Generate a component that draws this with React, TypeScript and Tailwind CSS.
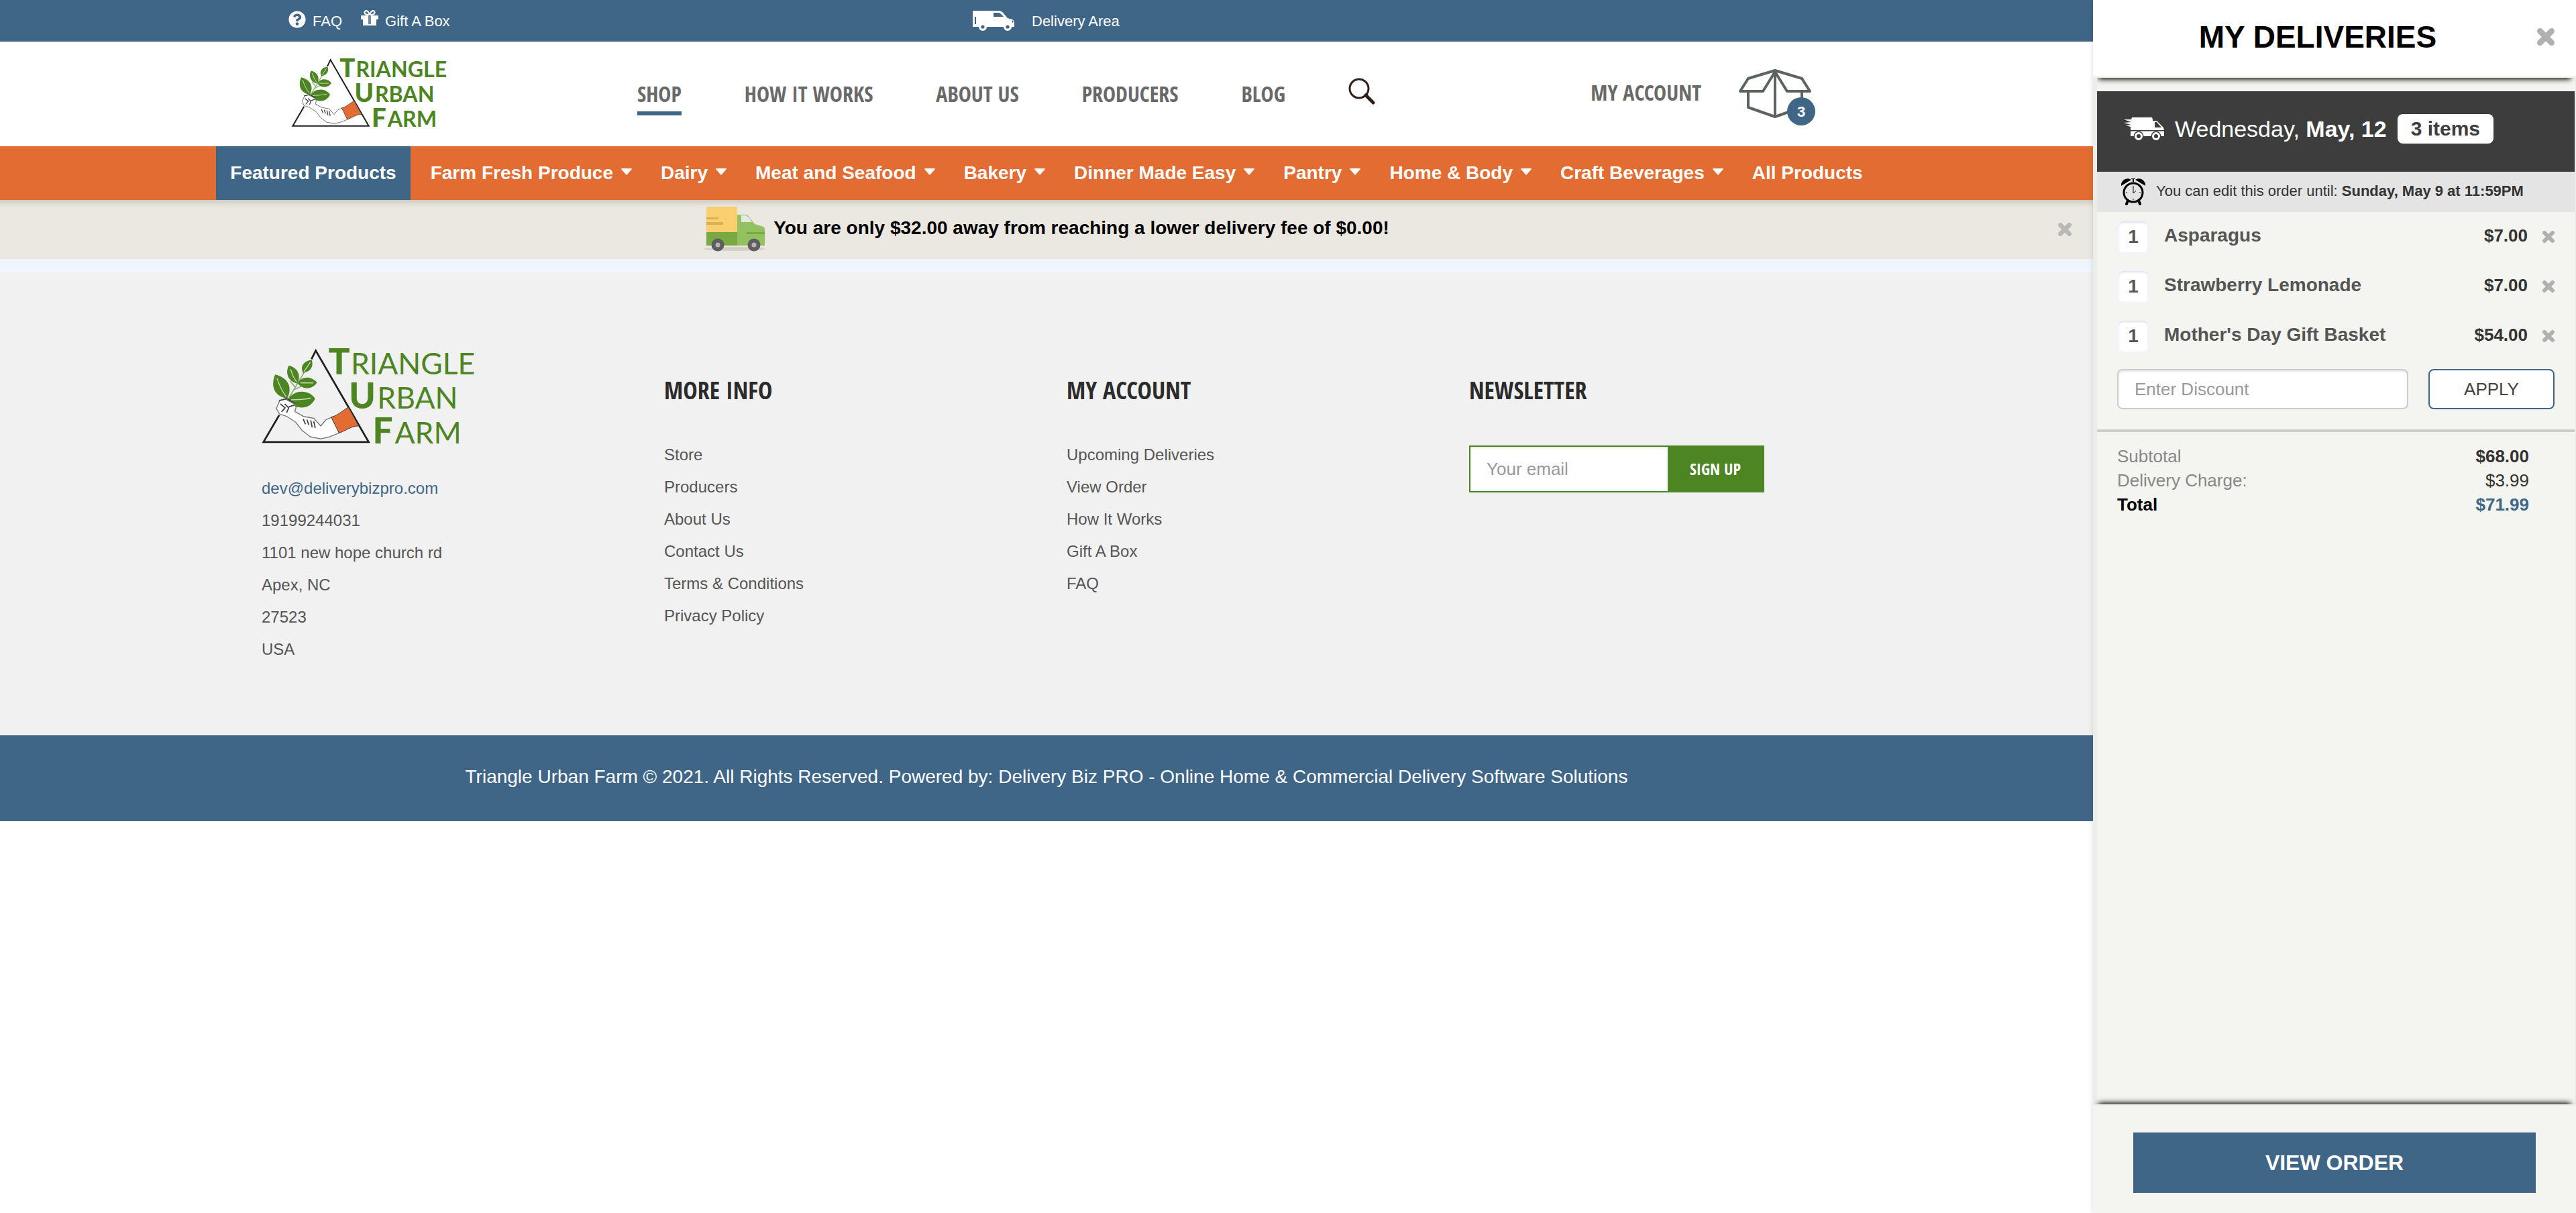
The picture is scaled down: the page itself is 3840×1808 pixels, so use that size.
import React from "react";
import { FaQuestionCircle } from "react-icons/fa";

const navItems = ["HOW IT WORKS", "ABOUT US", "PRODUCERS", "BLOG"];

const categories = [
  "Farm Fresh Produce",
  "Dairy",
  "Meat and Seafood",
  "Bakery",
  "Dinner Made Easy",
  "Pantry",
  "Home & Body",
  "Craft Beverages",
];

const address = ["19199244031", "1101 new hope church rd", "Apex, NC", "27523", "USA"];

const moreInfo = ["Store", "Producers", "About Us", "Contact Us", "Terms & Conditions", "Privacy Policy"];

const account = ["Upcoming Deliveries", "View Order", "How It Works", "Gift A Box", "FAQ"];

const cartItems = [
  { name: "Asparagus", quantity: 1, price: "$7.00" },
  { name: "Strawberry Lemonade", quantity: 1, price: "$7.00" },
  { name: "Mother's Day Gift Basket", quantity: 1, price: "$54.00" },
];

function Logo({ className }: { className: string }) {
  return (
    <svg viewBox="46 42 698 314" className={`overflow-visible ${className}`} role="img" aria-label="Triangle Urban Farm">
      <g fill="none" stroke="#1f1f1f" strokeWidth="6">
        <path d="M208 80 222 52 394 349H52L103 262" />
      </g>
      <path d="M132 210 198 100M150 180 196 157M132 210 108 165M138 150 156 172" fill="none" stroke="#8fb377" strokeWidth="4" />
      <g fill="#4c8522">
        <path d="M90 130C77 160 80 198 128 208 148 176 134 140 90 130Z" />
        <path d="M134 101C122 126 132 152 162 159 176 132 162 106 134 101Z" />
        <path d="M209 82C182 86 170 104 181 125 206 120 216 104 209 82Z" />
        <path d="M163 158C176 134 208 134 226 156 210 180 180 180 163 158Z" />
        <path d="M132 212C146 180 198 174 220 208 204 244 156 248 132 212Z" />
      </g>
      <g fill="none" stroke="#c6dcb6" strokeWidth="3">
        <path d="M96 142Q108 178 126 202M140 112Q148 138 160 154M204 90 184 120M172 157H214M142 212Q180 212 206 206" />
      </g>
      <path
        d="M94 240 105 214 124 210 150 224 158 236 154 250 182 266 216 272 238 297 256 276 276 268 298 320 268 332 238 339 204 332 178 312 156 284 128 266 104 258Z"
        fill="#fff"
        stroke="#777"
        strokeWidth="3"
        strokeLinejoin="round"
      />
      <path d="M104 214 128 208 152 222M108 226 122 238 112 250M122 226 134 238 128 252M136 234 150 230M182 276 188 290M194 278 199 292M206 280 210 300M216 284 220 302" fill="none" stroke="#444" strokeWidth="4" strokeLinecap="round" />
      <path d="M272 268C292 264 308 248 328 236L362 297C340 296 320 312 298 320Z" fill="#e36c33" stroke="#333" strokeWidth="2" />
      <g fill="#4c8522" fontFamily="Lato, sans-serif">
        <text x="263" y="130" fontSize="116" fontWeight="900">T</text>
        <text x="336" y="130" fontSize="97">RIANGLE</text>
        <text x="330" y="241" fontSize="116" fontWeight="900">U</text>
        <text x="422" y="241" fontSize="97">RBAN</text>
        <text x="407" y="353" fontSize="116" fontWeight="900">F</text>
        <text x="479" y="353" fontSize="97">ARM</text>
      </g>
    </svg>
  );
}

function GiftIcon() {
  return (
    <svg viewBox="0 0 26 24" className="h-6 w-6.5" aria-hidden="true">
      <path d="M0 8h11v15H3v-9H0zM15 8h11v6h-3v9h-8z" fill="#fff" />
      <path d="M11 8h4v15h-4z" fill="#fff" opacity=".25" />
      <path d="M12 7C7 7 4 5 6 2s6 1 7 5c1-4 5-8 7-5s-1 5-6 5" fill="none" stroke="#fff" strokeWidth="2" />
      <path d="M10 21h6v2h-6z" fill="#fff" />
    </svg>
  );
}

function VanIcon() {
  return (
    <svg viewBox="0 0 62 30" className="h-7.5 w-15.5" aria-hidden="true">
      <path d="M0 0H39Q43 0 46 4L52 11 59 13Q62 14 62 19V24H0Z" fill="#fff" />
      <path d="M31 3H39Q42 4 46 9H31ZM3 9h2v11H3zM59 14l2 3-2 1z" fill="#406687" />
      <circle cx="15" cy="24" r="6" fill="#fff" />
      <circle cx="52" cy="24" r="6" fill="#fff" />
      <circle cx="15" cy="24" r="2.6" fill="#406687" />
      <circle cx="52" cy="24" r="2.6" fill="#406687" />
    </svg>
  );
}

function FastVanIcon() {
  return (
    <svg viewBox="0 0 60 34" className="h-8.5 w-15" aria-hidden="true">
      <path d="M12 0H41Q43 0 43 5H49L58 14Q60 16 60 19H10V14L3 12 11 11 0 8 11 7 0 3 11 3Z" fill="#fff" />
      <path d="M46 7H49L56 15H46Z" fill="#3d3d3d" />
      <path d="M10 20.500H60V28H10Z" fill="#fff" />
      <circle cx="22" cy="28" r="7.500" fill="#3d3d3d" />
      <circle cx="48" cy="28" r="7.500" fill="#3d3d3d" />
      <circle cx="22" cy="28" r="4.500" fill="none" stroke="#fff" strokeWidth="3" />
      <circle cx="48" cy="28" r="4.500" fill="none" stroke="#fff" strokeWidth="3" />
    </svg>
  );
}

function GreenTruck() {
  return (
    <svg viewBox="0 0 92 68" className="h-17 w-23" aria-hidden="true">
      <ellipse cx="46" cy="63" rx="46" ry="3" fill="#d3d0c9" />
      <path d="M46 12H62Q66 12 68 16L76 26 86 29Q91 30 91 34V58H46Z" fill="#94c15f" />
      <path d="M56 13H62Q66 13 72 23H56Z" fill="#e4e8e6" />
      <rect x="64" y="38" width="27" height="3" fill="#7aa843" />
      <rect x="4" y="36" width="46" height="22" fill="#7aa843" />
      <path d="M7 0H47Q50 0 50 3V38H4V3Q4 0 7 0Z" fill="#f9cf70" />
      <path d="M4 16H22V19H4ZM4 23H29V27H4Z" fill="#dcae55" />
      <circle cx="21" cy="57" r="9.500" fill="#5e5e5e" />
      <circle cx="75" cy="57" r="9.500" fill="#5e5e5e" />
      <circle cx="21" cy="57" r="3.500" fill="#b5b5b5" />
      <circle cx="75" cy="57" r="3.500" fill="#b5b5b5" />
    </svg>
  );
}

function BoxIcon() {
  return (
    <svg viewBox="0 0 108 74" className="h-18.5 w-27" fill="none" stroke="#5c645e" strokeWidth="4" strokeLinejoin="round" aria-hidden="true">
      <path d="M54 2 14 14 2 33H36L54 4 72 33H106L94 14Z" />
      <path d="M54 4V71M14 33V57L54 71 94 57V33" />
    </svg>
  );
}

function SearchIcon() {
  return (
    <svg viewBox="0 0 40 40" className="size-10" fill="none" stroke="#2f1f18" aria-hidden="true">
      <circle cx="16" cy="16" r="14" strokeWidth="3" />
      <path d="M26 26 37 37" strokeWidth="5" strokeLinecap="round" />
    </svg>
  );
}

function ClockIcon() {
  return (
    <svg viewBox="0 0 36 40" className="h-10 w-9" aria-hidden="true">
      <path d="M0 11C-1 3 8-3 15 2ZM36 11C37 3 28-3 21 2ZM15 0h6v1h-2v4h-2V1h-2z" fill="#000" />
      <circle cx="18" cy="21" r="14" fill="none" stroke="#000" strokeWidth="3" />
      <path d="M18 11V22L22 18.500M7 21h2M27 21h2M18 30v2" fill="none" stroke="#000" strokeWidth="1" />
      <path d="M10 33 8 38M26 33 28 38" stroke="#000" strokeWidth="4" strokeLinecap="round" />
    </svg>
  );
}

function CloseIcon({ className }: { className: string }) {
  return (
    <svg viewBox="0 0 18 18" className={className} fill="none" stroke="currentColor" strokeWidth="6" aria-hidden="true">
      <path d="M3 3 15 15M15 3 3 15" strokeLinecap="round" />
    </svg>
  );
}

function Caret() {
  return (
    <svg viewBox="0 0 16 10" className="mb-1 h-2.5 w-4" aria-hidden="true">
      <path d="M1 0H15Q16 0 16 1L9 9Q8 10 7 9L0 1Q0 0 1 0Z" fill="#fff" />
    </svg>
  );
}

function FooterColumn({ title, children }: { title: string; children: React.ReactNode }) {
  return (
    <section className="px-7.5 pt-10">
      <h2 className="mb-12 font-['Open_Sans_Condensed','Roboto_Condensed',sans-serif] text-[36px] leading-12 font-bold text-[#2b2b2b]">{title}</h2>
      {children}
    </section>
  );
}

function LinkList({ items }: { items: string[] }) {
  return (
    <ul className="text-2xl leading-12">
      {items.map((item) => (
        <li key={item}>
          <a href="#">{item}</a>
        </li>
      ))}
    </ul>
  );
}

function StoreFront() {
  return (
    <div className="min-w-0 flex-1">
      <div className="bg-[#406687] text-[22px] text-white">
        <div className="mx-auto flex h-15.5 max-w-[2400px] items-center">
          <div className="flex w-5/12 items-center gap-7 pl-17.5">
            <a href="#" className="flex items-center gap-2.5">
              <FaQuestionCircle className="mb-1 size-6.5" />
              FAQ
            </a>
            <a href="#" className="flex items-center gap-2.5">
              <span className="mb-2">
                <GiftIcon />
              </span>
              Gift A Box
            </a>
          </div>
          <a href="#" className="flex items-center gap-6.5 pl-22.5">
            <VanIcon />
            Delivery Area
          </a>
        </div>
      </div>

      <header className="bg-white">
        <div className="mx-auto flex h-39 max-w-[2400px] items-center pr-15 font-['Open_Sans_Condensed','Roboto_Condensed',sans-serif] text-[32px] font-bold text-[#696969]">
          <a href="#" className="w-[590px] shrink-0 pb-1 pl-18.5">
            <Logo className="h-26 w-[232px]" />
          </a>
          <nav className="flex items-center gap-[94px]">
            <a href="#" className="border-y-6 border-y-transparent border-b-[#406687] leading-13">
              SHOP
            </a>
            {navItems.map((item) => (
              <a key={item} href="#">
                {item}
              </a>
            ))}
            <button type="button" aria-label="Search" className="mb-2">
              <SearchIcon />
            </button>
          </nav>
          <a href="#" className="mr-14 ml-auto pb-1">
            MY ACCOUNT
          </a>
          <button type="button" aria-label="Cart, 3 items" className="relative">
            <BoxIcon />
            <span className="absolute -right-1.5 -bottom-2.5 flex size-10.5 items-center justify-center rounded-full bg-[#406687] font-['Liberation_Sans',sans-serif] text-[22px] text-white">
              3
            </span>
          </button>
        </div>
      </header>

      <nav className="flex h-20 items-stretch justify-center gap-px bg-[#e36c33] text-[28px] font-bold text-white">
        <a href="#" className="mr-2 flex items-center bg-[#406687] px-[21px]">
          Featured Products
        </a>
        {categories.map((category) => (
          <a key={category} href="#" className="flex items-center gap-3 px-[21px]">
            {category}
            <Caret />
          </a>
        ))}
        <a href="#" className="flex items-center px-[21px]">
          All Products
        </a>
      </nav>

      <div className="flex h-22 items-center bg-[#ebe8e1] pr-8 pl-13 shadow-[inset_0_12px_8px_-8px_#c8c5bc]">
        <div className="flex flex-1 items-center justify-center gap-3">
          <GreenTruck />
          <p className="pb-1 text-[28px] font-bold text-black">
            You are only $32.00 away from reaching a lower delivery fee of $0.00!
          </p>
        </div>
        <button type="button" aria-label="Dismiss" className="text-[#b9b8b4]">
          <CloseIcon className="size-5" />
        </button>
      </div>
      <div className="h-5 bg-[#f0f4fd]" />

      <footer>
        <div className="bg-[#f1f1f1] pt-28 pb-26 text-[#555]">
          <div className="mx-auto grid max-w-[2400px] grid-cols-4">
            <section className="px-7.5">
              <Logo className="h-36 w-80" />
              <ul className="mt-10.5 text-2xl leading-12">
                <li>
                  <a href="#" className="text-[#406687]">
                    dev@deliverybizpro.com
                  </a>
                </li>
                {address.map((line) => (
                  <li key={line}>{line}</li>
                ))}
              </ul>
            </section>
            <FooterColumn title="MORE INFO">
              <LinkList items={moreInfo} />
            </FooterColumn>
            <FooterColumn title="MY ACCOUNT">
              <LinkList items={account} />
            </FooterColumn>
            <FooterColumn title="NEWSLETTER">
              <form className="mt-14.5 flex h-17.5 w-110 border-2 border-[#4c8522] bg-[#4c8522]">
                <input
                  type="email"
                  aria-label="Your email"
                  placeholder="Your email"
                  className="min-w-0 flex-1 bg-white px-6 text-[26px] shadow-[inset_0_2px_3px_#e6e6e6] placeholder:text-[#999]"
                />
                <button
                  type="button"
                  className="w-35.5 font-['Open_Sans_Condensed','Roboto_Condensed',sans-serif] text-2xl font-bold text-white"
                >
                  SIGN UP
                </button>
              </form>
            </FooterColumn>
          </div>
        </div>
        <p className="h-32 bg-[#406687] text-center text-[28px] leading-31 text-white">
          Triangle Urban Farm © 2021. All Rights Reserved. Powered by: Delivery Biz PRO - Online Home &amp; Commercial Delivery Software Solutions
        </p>
      </footer>
    </div>
  );
}

function Deliveries() {
  return (
    <aside className="flex min-h-screen w-180 shrink-0 flex-col bg-[#f4f5f0] text-[#333] shadow-[0_0_8px_#00000022]">
      <div className="flex h-29 items-center border-b-2 border-[#ebede6] bg-white pr-8 pb-1 pl-2 shadow-[0_10px_8px_-8px_#000000]">
        <h1 className="flex-1 text-center text-[46px] font-bold text-black">MY DELIVERIES</h1>
        <button type="button" aria-label="Close" className="text-[#b0b0b0]">
          <CloseIcon className="size-6.5" />
        </button>
      </div>

      <div className="flex-1 border-r-2 border-l-6 border-[#ebede6] pt-5">
        <div className="flex h-30 items-center bg-[#3d3d3d] pb-2 pl-10 text-[34px] text-white">
          <FastVanIcon />
          <p className="ml-4">
            Wednesday, <strong>May, 12</strong>
          </p>
          <span className="ml-4 rounded-lg bg-white px-5 text-[30px] leading-11 font-bold text-[#3d3d3d]">3 items</span>
        </div>
        <div className="flex h-15 items-center gap-4 bg-[#e4e4e4] pl-9 text-[22px]">
          <ClockIcon />
          <p className="pb-1">
            You can edit this order until: <strong>Sunday, May 9 at 11:59PM</strong>
          </p>
        </div>

        <ul className="px-7.5 font-bold">
          {cartItems.map((item) => (
            <li key={item.name} className="flex h-18.5 items-center">
              <input
                type="text"
                defaultValue={item.quantity}
                aria-label={`Quantity of ${item.name}`}
                className="h-12.5 w-12 rounded-lg border-2 border-[#f0f4fd] bg-white text-center text-[28px] text-[#555] shadow-[inset_0_2px_3px_#e0e0e0]"
              />
              <span className="ml-5.5 flex-1 pb-1 text-[28px] text-[#555]">{item.name}</span>
              <span className="pb-1 text-[26px]">{item.price}</span>
              <button type="button" aria-label={`Remove ${item.name}`} className="ml-5.5 text-[#b0b0b0]">
                <CloseIcon className="size-4.5" />
              </button>
            </li>
          ))}
        </ul>

        <form className="mt-3 flex h-15 gap-7.5 px-7.5 text-[26px]">
          <input
            type="text"
            aria-label="Enter Discount"
            placeholder="Enter Discount"
            className="min-w-0 flex-1 rounded-lg border-2 border-[#ccc] bg-white px-6 shadow-[inset_0_2px_3px_#e6e6e6] placeholder:text-[#999]"
          />
          <button type="button" className="w-47 rounded-lg border-2 border-[#406687] bg-white text-[#444]">
            APPLY
          </button>
        </form>

        <table className="mt-7.5 w-full border-t-4 border-[#cdcdcd] text-[26px] leading-9">
          <tbody>
            <tr>
              <th scope="row" className="pt-4.5 pl-7.5 text-left font-normal text-[#888]">Subtotal</th>
              <td className="pt-4.5 pr-17 text-right font-bold">$68.00</td>
            </tr>
            <tr>
              <th scope="row" className="pl-7.5 text-left font-normal text-[#888]">Delivery Charge:</th>
              <td className="pr-17 text-right">$3.99</td>
            </tr>
            <tr>
              <th scope="row" className="pl-7.5 text-left font-bold text-black">Total</th>
              <td className="pr-17 text-right font-bold text-[#406687]">$71.99</td>
            </tr>
          </tbody>
        </table>
      </div>

      <div className="border-t-2 border-[#ebede6] bg-[#f4f5f0] px-15 pt-10 pb-7.5 shadow-[0_-10px_8px_-8px_#000000]">
        <button type="button" className="h-22.5 w-full bg-[#406687] text-[32px] font-bold text-white">
          VIEW ORDER
        </button>
      </div>
    </aside>
  );
}

export default function App() {
  return (
    <div className="flex min-h-screen bg-white font-['Liberation_Sans',Arial,sans-serif]">
      <StoreFront />
      <Deliveries />
    </div>
  );
}
